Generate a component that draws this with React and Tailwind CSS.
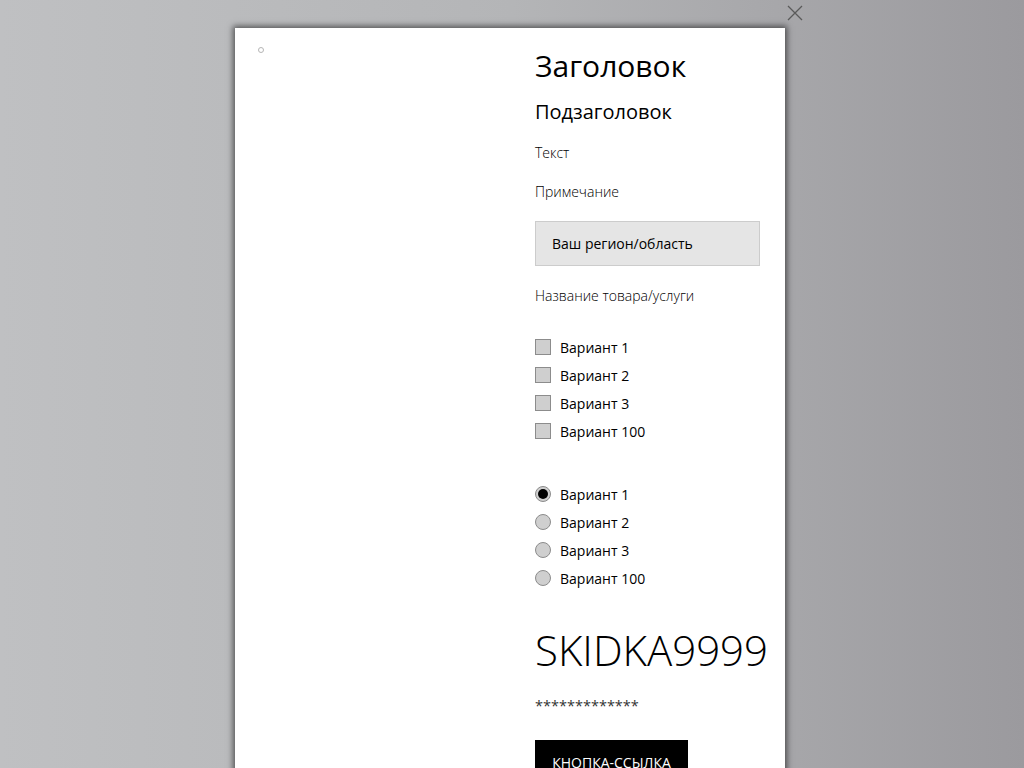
import React from 'react';

const options = ['Вариант 1', 'Вариант 2', 'Вариант 3', 'Вариант 100'];

const CheckRow = ({ label }) => (
    <label className="flex items-center h-[28px] gap-[9px] text-[14px] text-black">
        <span className="w-[16px] h-[16px] border border-[#8c8c8c] bg-[#cfcfcf] shrink-0" />
        <span>{label}</span>
    </label>
);

const RadioRow = ({ label, checked }) => (
    <label className="flex items-center h-[28px] gap-[9px] text-[14px] text-black">
        <span className="w-[16px] h-[16px] rounded-full border border-[#8c8c8c] bg-[#cfcfcf] shrink-0 flex items-center justify-center">
            {checked && <span className="w-[10px] h-[10px] rounded-full bg-black" />}
        </span>
        <span>{label}</span>
    </label>
);

export default function App() {
    return (
        <div
            className="relative h-[768px] overflow-hidden bg-gradient-to-r from-[#bfc0c2] via-[#b4b5b7] to-[#9b9a9e]"
            style={{ fontFamily: '"Open Sans", "Noto Sans", sans-serif' }}
        >
            <button className="absolute left-[787px] top-[5px] w-[16px] h-[16px] text-[#5a5a5a]">
                <svg viewBox="0 0 16 16" className="w-[16px] h-[16px]" fill="none" stroke="currentColor" strokeWidth="1.3">
                    <path d="M1 1L15 15M15 1L1 15" />
                </svg>
            </button>

            <div className="pt-[28px] pl-[235px]">
                <div className="w-[550px] h-[760px] bg-white shadow-[0_0_6px_2px_rgba(0,0,0,0.55)] flex">
                    <div className="w-[300px] pl-[23px] pt-[19px]">
                        <span className="block w-[6px] h-[6px] rounded-full border border-[#b5b5b5]" />
                    </div>

                    <div className="w-[230px] pt-[20px] flex flex-col items-start">
                        <h1 className="text-[30px] leading-[36px] text-black font-normal">Заголовок</h1>
                        <h2 className="mt-[15px] text-[20px] leading-[26px] text-black font-normal">Подзаголовок</h2>
                        <p className="mt-[18px] text-[14px] leading-[20px] font-light text-black">Текст</p>
                        <p className="mt-[19px] text-[14px] leading-[20px] font-light text-black">Примечание</p>

                        <div className="mt-[19px] w-[225px] h-[45px] bg-[#e5e5e5] border border-[#cccccc] flex items-center pl-[16px] text-[14px] text-black">
                            Ваш регион/область
                        </div>

                        <p className="mt-[20px] text-[14px] leading-[20px] font-light text-black">Название товара/услуги</p>

                        <div className="mt-[27px] flex flex-col">
                            {options.map((o) => (
                                <CheckRow key={o} label={o} />
                            ))}
                        </div>

                        <div className="mt-[35px] flex flex-col">
                            {options.map((o, i) => (
                                <RadioRow key={o} label={o} checked={i === 0} />
                            ))}
                        </div>

                        <div className="mt-[33px] text-[42px] leading-[50px] font-light text-black whitespace-nowrap">SKIDKA9999</div>

                        <p className="mt-[21px] text-[14.5px] leading-[20px] text-[#333]">*************</p>

                        <a className="mt-[24px] h-[45px] w-[153px] bg-black text-white text-[14px] flex items-center justify-center">
                            КНОПКА-ССЫЛКА
                        </a>
                    </div>
                </div>
            </div>
        </div>
    );
}
